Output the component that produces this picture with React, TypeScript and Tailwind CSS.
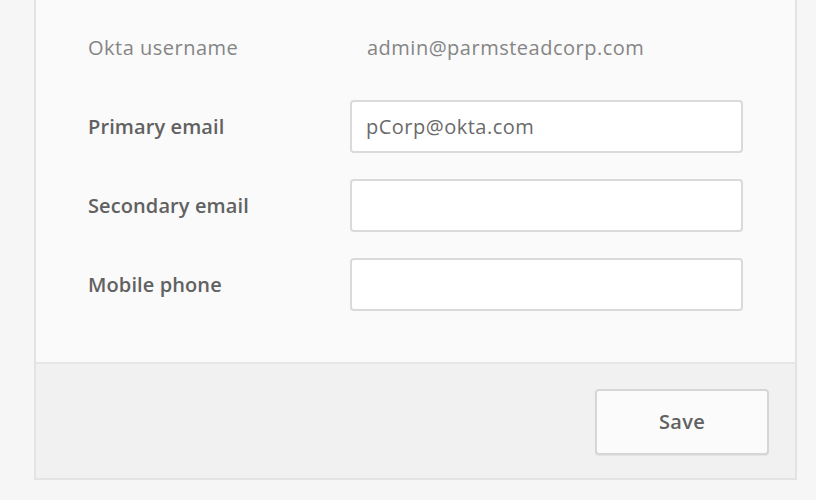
const rows = [
  { label: "Primary email", value: "pCorp@okta.com" },
  { label: "Secondary email", value: "" },
  { label: "Mobile phone", value: "" },
];

export default function App() {
  return (
    <div className="h-[500px] w-[816px] bg-[#f6f6f6] pl-[34px] font-['Open_Sans',sans-serif]">
      <div className="w-[763px] border-x-2 border-b-2 border-[#e3e3e3] bg-[#fafafa]">
        {/* Form body */}
        <div className="flex flex-col gap-[26px] pt-[21px] pb-[51px] pl-[52px]">
          <div className="flex h-[53px] items-center text-[20px] tracking-[0.5px] text-[#858585]">
            <span className="w-[262px]">Okta username</span>
            <span className="pl-[17px]">admin@parmsteadcorp.com</span>
          </div>
          {rows.map((r) => (
            <div key={r.label} className="flex h-[53px] items-center">
              <span className="w-[262px] text-[20px] font-semibold tracking-[0.1px] text-[#616161]">{r.label}</span>
              <input
                defaultValue={r.value}
                className="h-full w-[393px] rounded-[4px] border-2 border-[#dadada] bg-white px-[14px] text-[20px] tracking-[0.5px] text-[#6a6a6a] outline-none"
              />
            </div>
          ))}
        </div>

        {/* Footer */}
        <div className="flex justify-end border-t-2 border-[#e6e6e6] bg-[#f1f1f1] pt-[25px] pb-[23px] pr-[26px]">
          <button className="h-[66px] w-[174px] rounded-[4px] border-2 border-[#d6d6d6] bg-[#fbfbfb] text-[20px] font-semibold tracking-[0.3px] text-[#616161] shadow-[0_1px_1px_rgba(0,0,0,0.06)]">
            Save
          </button>
        </div>
      </div>
    </div>
  );
}
